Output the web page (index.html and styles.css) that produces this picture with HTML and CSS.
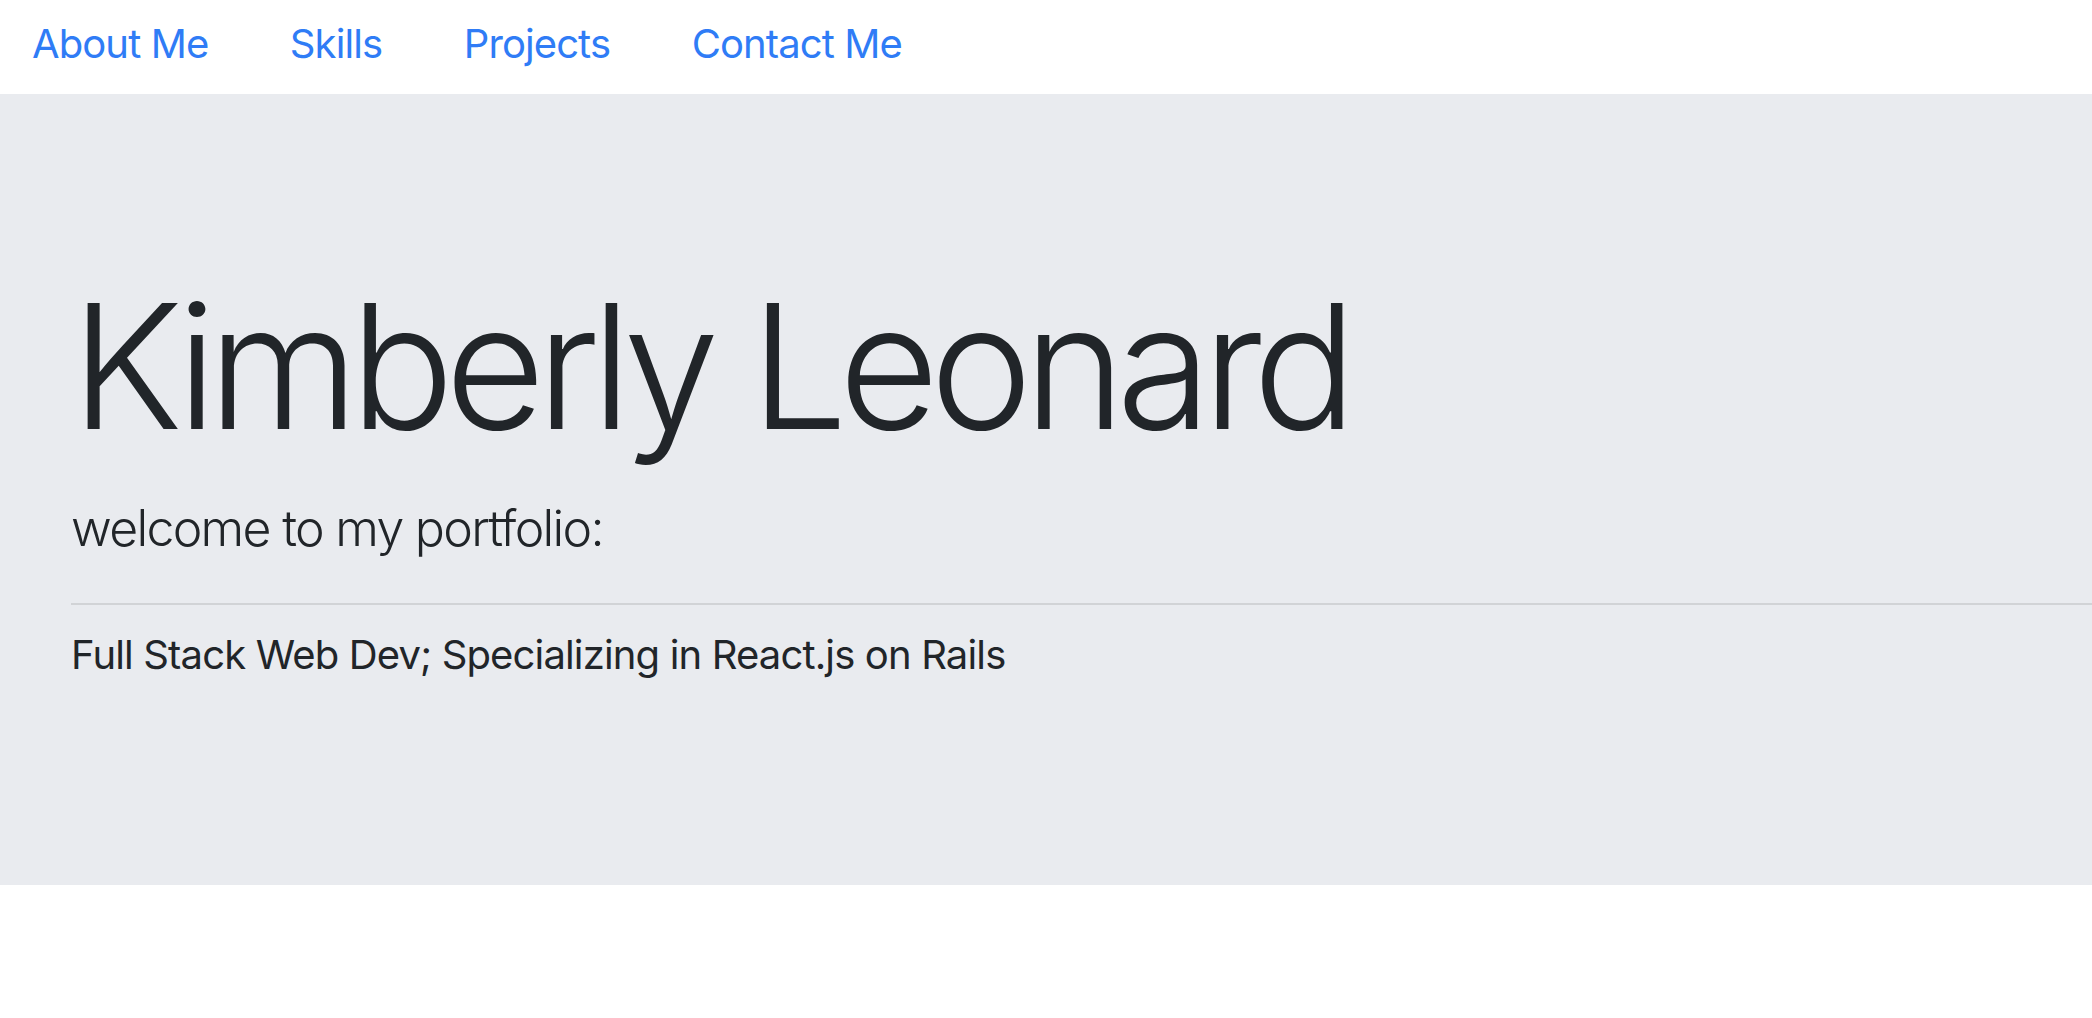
FILE: index.html
```html
<!DOCTYPE html>
<html lang="en">
<head>
<meta charset="utf-8">
<title>Kimberly Leonard</title>
<link rel="stylesheet" href="styles.css">
</head>
<body>
<nav class="topnav">
  <a class="nav-link" href="#about">About Me</a>
  <a class="nav-link" href="#skills">Skills</a>
  <a class="nav-link" href="#projects">Projects</a>
  <a class="nav-link" href="#contact">Contact Me</a>
</nav>
<header class="jumbotron">
  <h1 class="display">Kimberly Leonard</h1>
  <p class="lead">welcome to my portfolio:</p>
  <hr class="divider">
  <p class="tagline">Full Stack Web Dev; Specializing in React.js on Rails</p>
</header>
</body>
</html>
```

FILE: styles.css
```css
html, body {
  margin: 0;
  padding: 0;
  background: #ffffff;
}
body {
  font-family: Inter, "Noto Sans", "Liberation Sans", sans-serif;
  color: #212529;
}
.topnav {
  display: flex;
  align-items: center;
  gap: 81.5px;
  padding: 14px 0 20px 32px;
  height: 60px;
}
.nav-link {
  font-size: 40px;
  line-height: 60px;
  letter-spacing: -0.9px;
  color: #2f7cf6;
  text-decoration: none;
  font-weight: 400;
}
.jumbotron {
  background: #e9ebef;
  padding: 164px 0 200px 71px;
}
.display {
  margin: 0 0 17px 0;
  font-size: 173px;
  line-height: 216px;
  letter-spacing: -9px;
  font-weight: 300;
  color: #212529;
}
.lead {
  margin: 0 0 37px 0;
  font-size: 50px;
  line-height: 75px;
  letter-spacing: -1.7px;
  font-weight: 300;
}
.divider {
  margin: 0;
  border: 0;
  border-top: 2px solid rgba(0, 0, 0, 0.1);
}
.tagline {
  margin: 20px 0 0 0;
  font-size: 40px;
  line-height: 60px;
  letter-spacing: -0.85px;
  font-weight: 400;
}
```
